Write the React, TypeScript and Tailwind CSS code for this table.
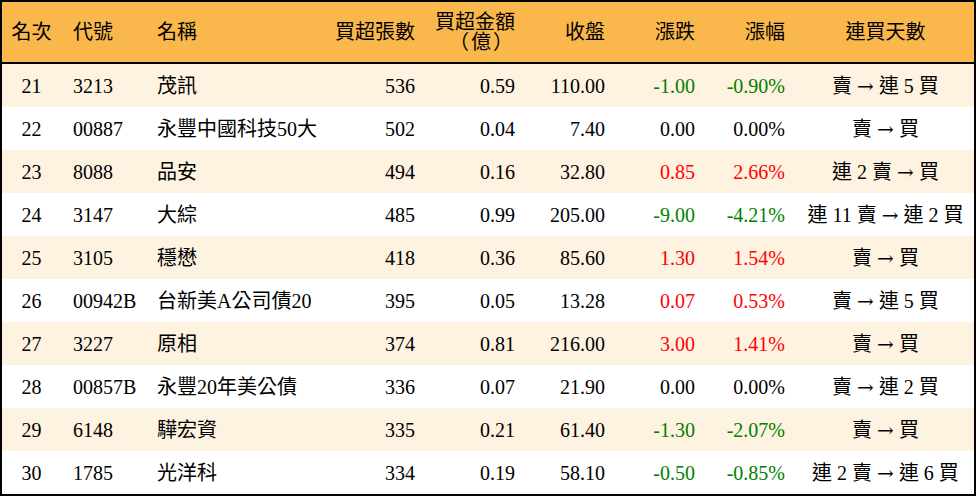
import React from "react";

type Row = {
  rank: string;
  code: string;
  name: string;
  qty: string;
  amt: string;
  close: string;
  chg: string;
  pct: string;
  days: string;
};

const rows: Row[] = [
  { rank: "21", code: "3213", name: "茂訊", qty: "536", amt: "0.59", close: "110.00", chg: "-1.00", pct: "-0.90%", days: "賣|連 5 買" },
  { rank: "22", code: "00887", name: "永豐中國科技50大", qty: "502", amt: "0.04", close: "7.40", chg: "0.00", pct: "0.00%", days: "賣|買" },
  { rank: "23", code: "8088", name: "品安", qty: "494", amt: "0.16", close: "32.80", chg: "0.85", pct: "2.66%", days: "連 2 賣|買" },
  { rank: "24", code: "3147", name: "大綜", qty: "485", amt: "0.99", close: "205.00", chg: "-9.00", pct: "-4.21%", days: "連 11 賣|連 2 買" },
  { rank: "25", code: "3105", name: "穩懋", qty: "418", amt: "0.36", close: "85.60", chg: "1.30", pct: "1.54%", days: "賣|買" },
  { rank: "26", code: "00942B", name: "台新美A公司債20", qty: "395", amt: "0.05", close: "13.28", chg: "0.07", pct: "0.53%", days: "賣|連 5 買" },
  { rank: "27", code: "3227", name: "原相", qty: "374", amt: "0.81", close: "216.00", chg: "3.00", pct: "1.41%", days: "賣|買" },
  { rank: "28", code: "00857B", name: "永豐20年美公債", qty: "336", amt: "0.07", close: "21.90", chg: "0.00", pct: "0.00%", days: "賣|連 2 買" },
  { rank: "29", code: "6148", name: "驊宏資", qty: "335", amt: "0.21", close: "61.40", chg: "-1.30", pct: "-2.07%", days: "賣|買" },
  { rank: "30", code: "1785", name: "光洋科", qty: "334", amt: "0.19", close: "58.10", chg: "-0.50", pct: "-0.85%", days: "連 2 賣|連 6 買" },
];

const cols = "grid grid-cols-[59px_84px_190px_92px_100px_90px_90px_90px_177px]";

function colorOf(v: string) {
  if (v.startsWith("-")) return "text-[#008000]";
  if (/^0\.00/.test(v)) return "text-black";
  return "text-[#ff0000]";
}

function Days({ v }: { v: string }) {
  const [a, b] = v.split("|");
  return (
    <span className="whitespace-pre">
      {a}{" "}
      <span style={{ fontFamily: '"DejaVu Serif", serif' }} className="text-[20px]">→</span>
      {" "}{b}
    </span>
  );
}

const L = "px-3 flex justify-start whitespace-nowrap";
const R = "px-3 flex justify-end whitespace-nowrap";
const C = "flex justify-center whitespace-nowrap";

export default function App() {
  return (
    <div
      className="w-[976px] h-[496px] bg-white text-black text-[20px] leading-[20px]"
      style={{ fontFamily: '"Liberation Serif", "Noto Sans CJK TC", serif' }}
    >
      <div className="w-[976px] h-[496px] border-2 border-black flex flex-col">
        <div className={`${cols} h-[62px] bg-[#f9b74c] border-b-2 border-black items-center`}>
          <div className={C}>名次</div>
          <div className={L}>代號</div>
          <div className={L}>名稱</div>
          <div className={R}>買超張數</div>
          <div className="px-3 flex flex-col items-end whitespace-nowrap">
            <span>買超金額</span>
            <span className="tracking-[2px]">（億）</span>
          </div>
          <div className={R}>收盤</div>
          <div className={R}>漲跌</div>
          <div className={R}>漲幅</div>
          <div className={C}>連買天數</div>
        </div>
        {rows.map((r, i) => (
          <div
            key={r.rank}
            className={`${cols} h-[43px] items-center ${i % 2 === 0 ? "bg-[#fef3e0]" : "bg-white"}`}
          >
            <div className={C}>{r.rank}</div>
            <div className={L}>{r.code}</div>
            <div className={L}>{r.name}</div>
            <div className={R}>{r.qty}</div>
            <div className={R}>{r.amt}</div>
            <div className={R}>{r.close}</div>
            <div className={`${R} ${colorOf(r.chg)}`}>{r.chg}</div>
            <div className={`${R} ${colorOf(r.pct)}`}>{r.pct}</div>
            <div className={C}>
              <Days v={r.days} />
            </div>
          </div>
        ))}
      </div>
    </div>
  );
}
